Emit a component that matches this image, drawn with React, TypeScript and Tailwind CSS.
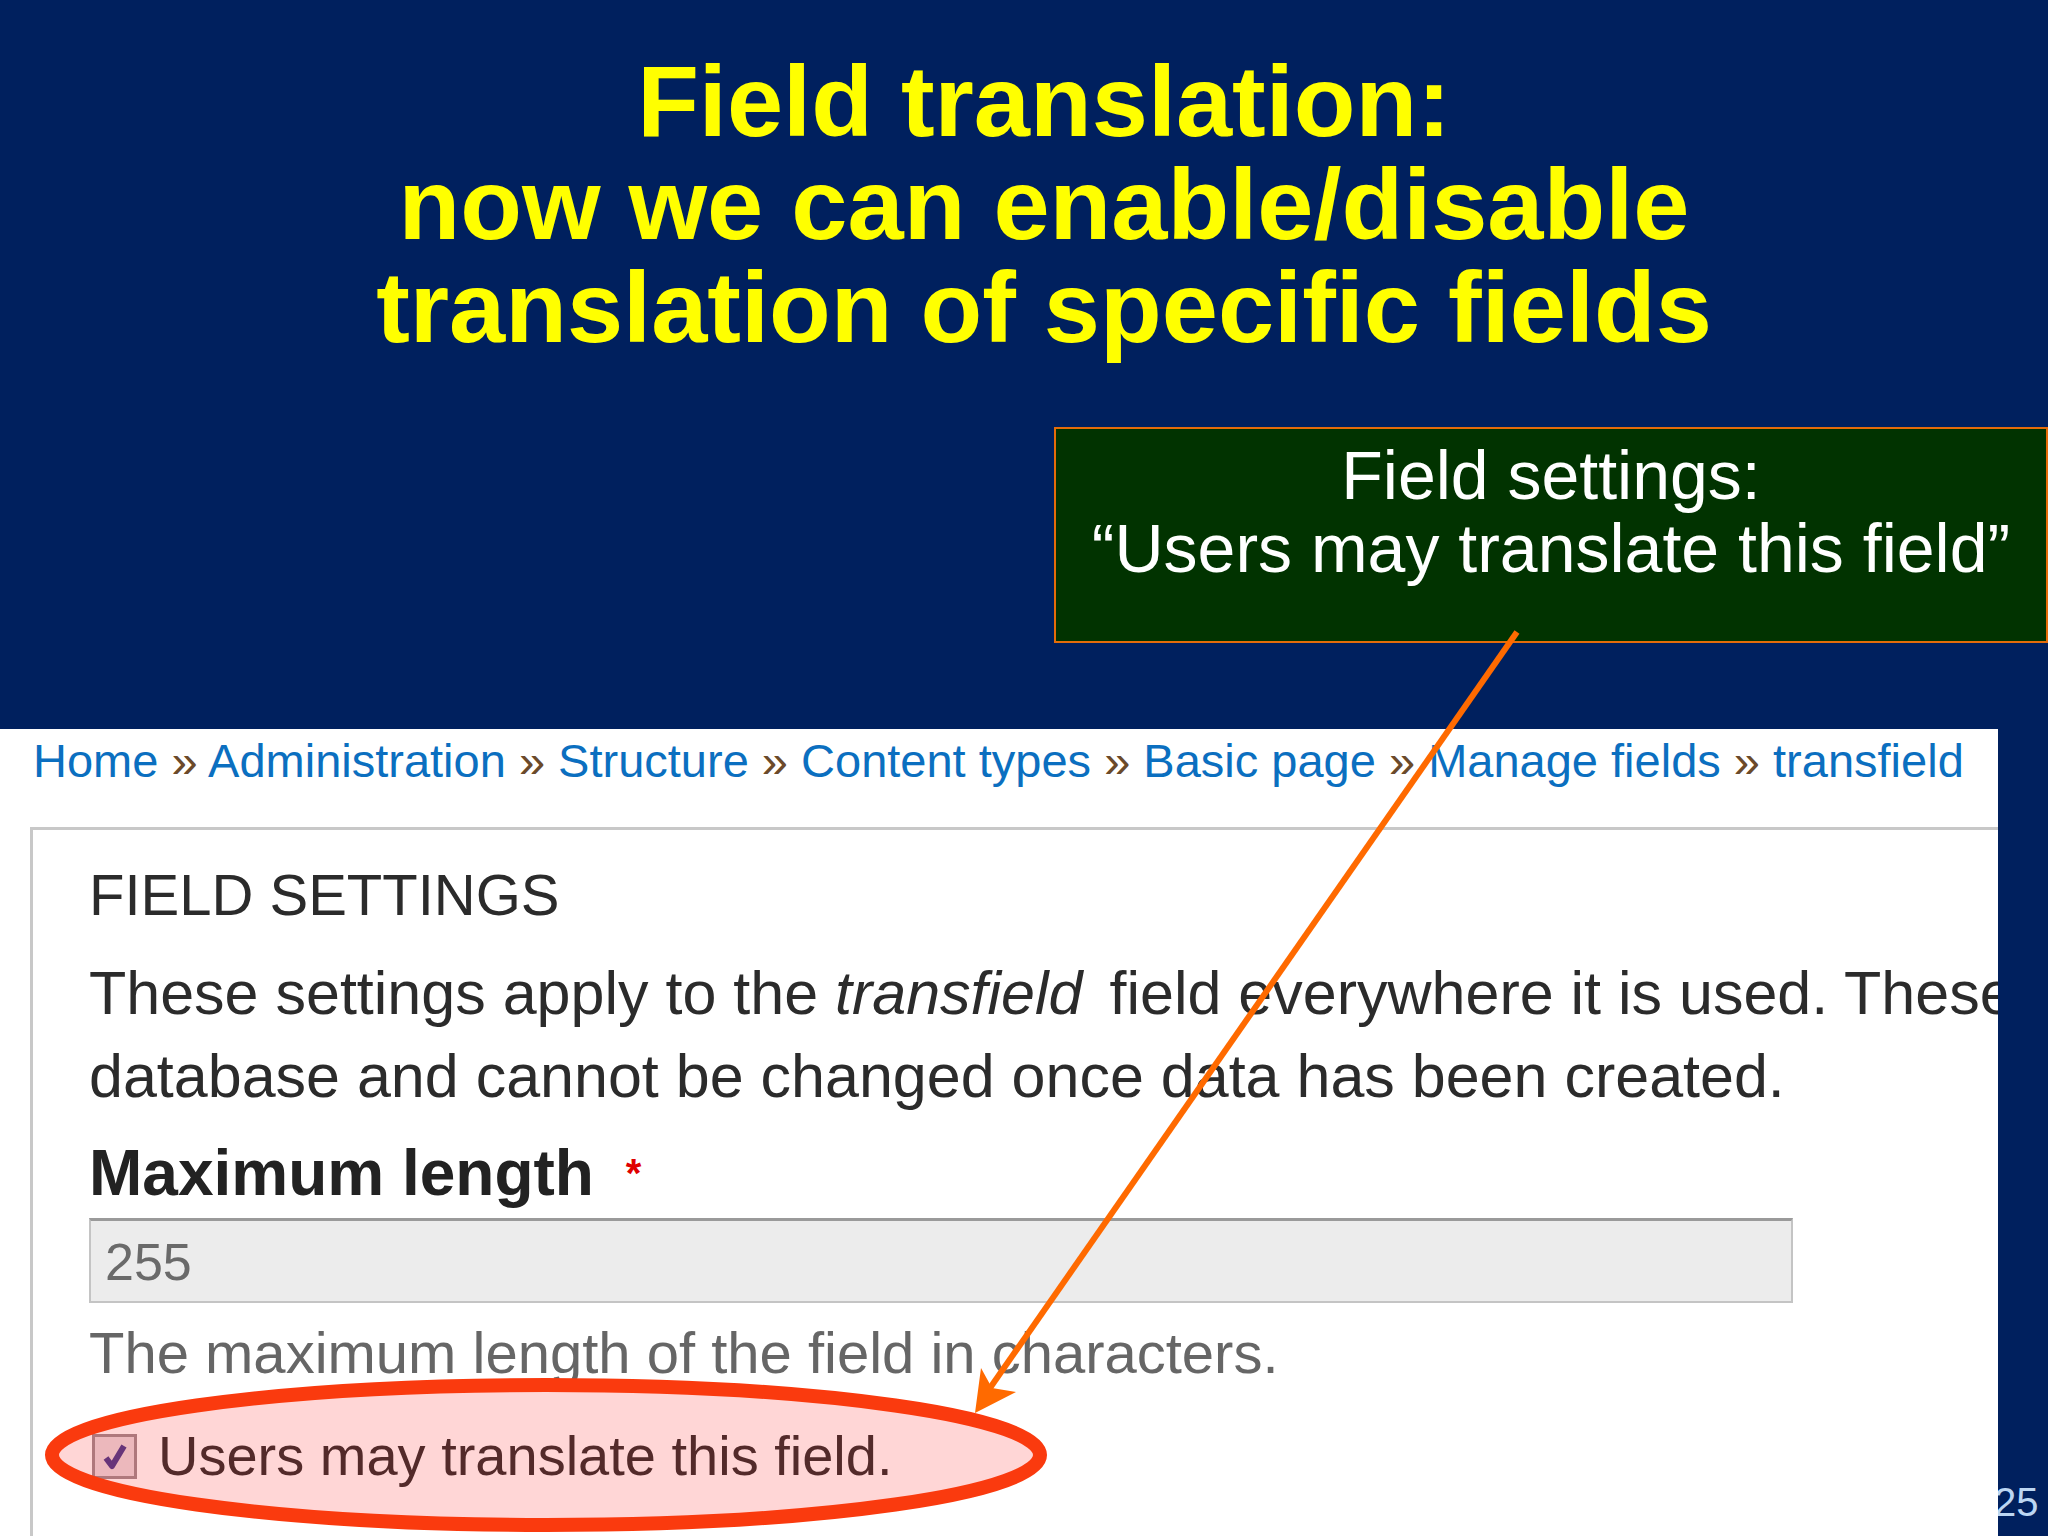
import React from 'react';

const CRUMBS = ['Home', 'Administration', 'Structure', 'Content types', 'Basic page', 'Manage fields', 'transfield'];

function Checkbox() {
  return (
    <div className="flex h-[45px] w-[45px] shrink-0 items-center justify-center border-[3px] border-[#a08f94] bg-[#e9dce0]">
      <svg width="30" height="30" viewBox="0 0 30 30">
        <path d="M6 17 L12 25 L24 5" fill="none" stroke="#4b3f91" strokeWidth="6" strokeLinejoin="round" />
      </svg>
    </div>
  );
}

function Annotations() {
  return (
    <svg className="pointer-events-none absolute left-0 top-0" width="2048" height="1536" viewBox="0 0 2048 1536">
      <ellipse cx="546" cy="1455" rx="494" ry="70" fill="#ff0000" fillOpacity="0.16" stroke="#fa3a0e" strokeWidth="14" />
      <line x1="1517" y1="632" x2="990" y2="1388" stroke="#ff6a00" strokeWidth="6" />
      <polygon points="975,1413 981,1368 992,1388 1016,1392" fill="#ff6a00" />
    </svg>
  );
}

export default function App() {
  return (
    <div className="relative h-[1536px] w-[2048px] overflow-hidden bg-[#00205e] font-['Liberation_Sans',Arial,sans-serif]">
      <div className="pl-[40px] pt-[50px] text-center text-[101px] font-bold leading-[103px] text-[#ffff00]">
        <div>Field translation:</div>
        <div>now we can enable/disable</div>
        <div>translation of specific fields</div>
      </div>

      <div className="mt-[68px] flex justify-end">
        <div className="h-[216px] w-[994px] border-2 border-[#e46c0a] bg-[#013300] pt-[10px] text-center text-[68px] leading-[73px] text-white">
          <div>Field settings:</div>
          <div>“Users may translate this field”</div>
        </div>
      </div>

      <div className="absolute bottom-[14px] left-[1994px] text-[40px] leading-none text-[#bcd6f2]">25</div>

      <div className="relative mt-[86px] h-[807px] w-[1998px] overflow-hidden bg-white">
        <div className="whitespace-nowrap pl-[33px] pt-[4px] text-[47px] leading-[56px] text-[#0b6fc0]">
          {CRUMBS.map((c, i) => (
            <span key={c}>
              {i > 0 && <span className="text-[#6b4a2a]"> » </span>}
              {c}
            </span>
          ))}
        </div>

        <div className="ml-[30px] mt-[38px] h-[800px] w-[2000px] border-l-[3px] border-t-[3px] border-[#c8c8c8] pl-[56px] pt-[33px]">
          <div className="text-[58px] leading-[64px] text-[#2b2b2b]">FIELD SETTINGS</div>

          <p className="mt-[25px] whitespace-nowrap text-[61px] leading-[83px] text-[#2b2b2b]">
            These settings apply to the <em className="pr-[10px]">transfield</em> field everywhere it is used. These settings impact the way that data is stored in the
            <br />
            database and cannot be changed once data has been created.
          </p>

          <div className="mt-[20px] text-[64px] font-bold leading-[70px] text-[#222]">
            Maximum length <span className="pl-[14px] align-top text-[40px] text-[#e00000]">*</span>
          </div>

          <div className="mt-[10px] h-[85px] w-[1704px] border-2 border-t-[3px] border-[#c4c4c4] border-t-[#9a9a9a] bg-[#ececec] pl-[14px] pt-[12px] text-[52px] leading-[58px] text-[#6a6a6a]">
            255
          </div>

          <div className="mt-[18px] text-[58px] leading-[64px] text-[#666]">The maximum length of the field in characters.</div>

          <div className="mt-[39px] flex items-center gap-[21px] pl-[3px]">
            <Checkbox />
            <span className="text-[56px] leading-[64px] text-[#333]">Users may translate this field.</span>
          </div>
        </div>
      </div>

      <Annotations />
    </div>
  );
}
